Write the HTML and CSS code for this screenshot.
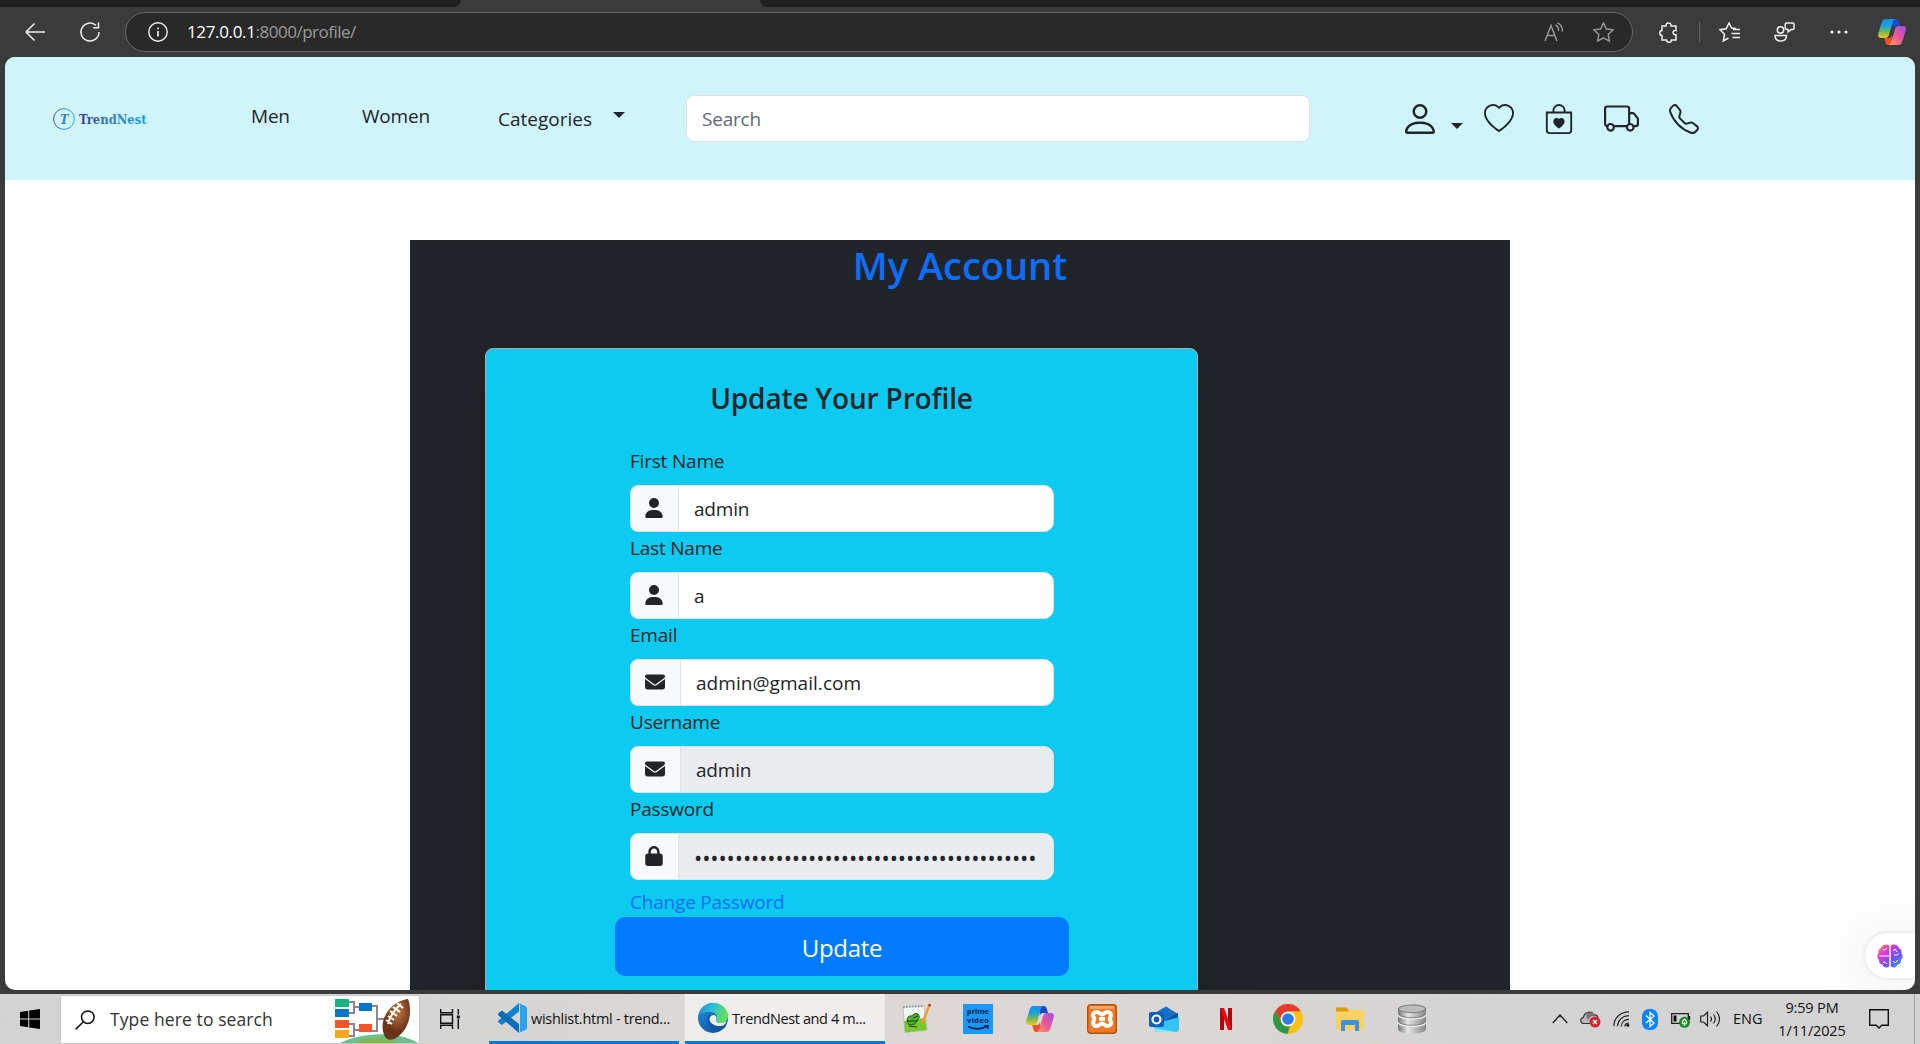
FILE: index.html
```html
<!DOCTYPE html>
<html lang="en">
<head>
<meta charset="utf-8">
<title>TrendNest</title>
<link rel="stylesheet" href="styles.css">
</head>
<body>
<svg class="defs" width="0" height="0" aria-hidden="true">
  <defs>
    <linearGradient id="cpA" x1="0" y1="0" x2="0" y2="1"><stop offset="0" stop-color="#1b8fe8"/><stop offset=".35" stop-color="#1a9fe0"/><stop offset=".65" stop-color="#6bb85a"/><stop offset="1" stop-color="#f5c518"/></linearGradient>
    <linearGradient id="cpB" x1="1" y1="0" x2="0" y2="1"><stop offset="0" stop-color="#a04df0"/><stop offset=".5" stop-color="#e8559a"/><stop offset="1" stop-color="#ffa24d"/></linearGradient>
    <linearGradient id="logoG" x1="0" x2="1"><stop offset="0" stop-color="#3a3f94"/><stop offset=".55" stop-color="#3a86c8"/><stop offset="1" stop-color="#12a5e6"/></linearGradient>
    <linearGradient id="brainG" x1="0" y1="0" x2="1" y2="1"><stop offset="0" stop-color="#ff9a3c"/><stop offset=".3" stop-color="#e33ad0"/><stop offset=".6" stop-color="#7a4df0"/><stop offset="1" stop-color="#22a8ff"/></linearGradient>
    <linearGradient id="edgeG" x1="0" y1="0" x2="1" y2=".3"><stop offset="0" stop-color="#1b8ad6"/><stop offset=".5" stop-color="#2cc0d8"/><stop offset="1" stop-color="#62e05a"/></linearGradient>
    <linearGradient id="edgeB" x1="0" y1="0" x2="1" y2="1"><stop offset="0" stop-color="#1f8fe0"/><stop offset="1" stop-color="#0c4a94"/></linearGradient>
    <linearGradient id="dbG" x1="0" x2="1"><stop offset="0" stop-color="#777"/><stop offset=".35" stop-color="#e6e6e6"/><stop offset="1" stop-color="#858585"/></linearGradient>
    <radialGradient id="ballG" cx=".55" cy=".3"><stop offset="0" stop-color="#c27a45"/><stop offset="1" stop-color="#6b331a"/></radialGradient>
    <symbol id="copilot" viewBox="0 0 28 26">
      <path fill="#1948cf" d="M13 0h4.500c2.500 0 3 1.800 3.600 4l.9 3h-5c-2 0-2.700 1-3.200 3z"/>
      <path fill="#f0502c" d="M15 26h-4.500C8 26 7.600 24 7 22l-.8-3h4.600c2 0 2.700-1 3.200-3z"/>
      <path fill="url(#cpA)" d="M7.500 0H18c-2 0-2.800 1.400-3.400 3.500L11 16c-.6 2-1.800 3-4 3H3c-2.500 0-3.300-2-2.700-4.500L3.500 4C4.300 1.400 5.500 0 7.500 0Z"/>
      <path fill="url(#cpB)" d="M20.500 26H10c2 0 2.800-1.400 3.400-3.500L17 10c.6-2 1.800-3 4-3h4c2.500 0 3.300 2 2.700 4.500L24.500 22c-.8 2.600-2 4-4 4Z"/>
    </symbol>
    <symbol id="fa-user" viewBox="0 0 448 512"><path d="M224 256A128 128 0 1 0 224 0a128 128 0 1 0 0 256zm-45.700 48C79.800 304 0 383.800 0 482.300C0 498.700 13.300 512 29.700 512H418.300c16.400 0 29.700-13.300 29.700-29.700C448 383.800 368.200 304 269.700 304H178.300z"/></symbol>
    <symbol id="fa-mail" viewBox="0 0 512 512"><path d="M48 64C21.500 64 0 85.500 0 112c0 15.100 7.100 29.300 19.200 38.400L236.800 313.600c11.400 8.500 27 8.500 38.400 0L492.800 150.400c12.100-9.100 19.200-23.300 19.200-38.400c0-26.500-21.500-48-48-48H48zM0 176V384c0 35.300 28.700 64 64 64H448c35.300 0 64-28.700 64-64V176L294.400 339.200c-22.800 17.100-54 17.100-76.800 0L0 176z"/></symbol>
    <symbol id="fa-lock" viewBox="0 0 448 512"><path d="M144 144v48H304V144c0-44.200-35.800-80-80-80s-80 35.800-80 80zM80 192V144C80 64.500 144.500 0 224 0s144 64.500 144 144v48h16c35.300 0 64 28.700 64 64V448c0 35.300-28.700 64-64 64H64c-35.300 0-64-28.700-64-64V256c0-35.300 28.700-64 64-64H80z"/></symbol>
  </defs>
</svg>

<div class="screen">
  <div class="tabs"><i class="tabs-left"></i><i class="tabs-active"></i><i class="tabs-right"></i></div>

  <div class="toolbar">
    <svg class="tb-back" width="20" height="18" viewBox="0 0 20 18"><path d="M20 9H1M9.500.5 1 9l8.500 8.500"/></svg>
    <svg class="tb-reload" width="20" height="20" viewBox="0 0 20 20"><path d="M19 10a9 9 0 1 1-3-6.700M18.500.5v5.300h-5.300"/></svg>
    <div class="address">
      <svg class="info" width="20" height="20" viewBox="0 0 20 20"><circle cx="10" cy="10" r="9.200"/><path d="M10 9v5.500M10 5.500v1.700" stroke-width="1.700"/></svg>
      <div class="url"><b>127.0.0.1</b><span>:8000/profile/</span></div>
      <svg class="read" width="20" height="20" viewBox="0 0 20 20"><path d="M1 19 7 3.500 13 19M3 13.500h8M11.500 3c2 1 3.200 3 3.200 6M13.500.8c3.200 1.500 5 4.500 5 8.700"/></svg>
      <svg class="star" width="21" height="20" viewBox="0 0 21 20"><path d="m10.500 1 2.900 6 6.600.9-4.800 4.500 1.200 6.600-5.900-3.200L4.600 19l1.200-6.600L1 7.900 7.600 7z"/></svg>
    </div>
    <svg class="ext" width="19" height="21" viewBox="0 0 19 21"><path d="M3 4h4c-.5-4 5.500-4 5 0h5v4.500c-4-.8-4 4.800 0 4.200V18h-4.500c0 3-5 3-5 0H3v-4.500c-3-.2-3-5 0-5z"/></svg>
    <i class="tb-div"></i>
    <svg class="fav" width="22" height="20" viewBox="0 0 22 20"><path d="M17 6.500 12.500 6 10 1 7.200 6.800 1 7.700l4.500 4.500L4.300 19l5.200-3M14 7.500h7M12.500 11.500H21M13.500 15.500H21"/></svg>
    <svg class="people" width="21" height="20" viewBox="0 0 21 20"><circle cx="6.500" cy="8" r="3.200"/><path d="M1 13.500h11.500c0 3.500-2 5.500-5.700 5.500S1 17 1 13.500ZM12.500 1h6.200q1.300 0 1.300 1.300v4q0 1.300-1.300 1.300H17l-3 2.400V7.600q-2.800 0-2.800-1.500V2.300Q11.200 1 12.500 1Z"/></svg>
    <svg class="dots" width="18" height="4" viewBox="0 0 18 4"><circle cx="2" cy="2" r="1.600"/><circle cx="9" cy="2" r="1.600"/><circle cx="16" cy="2" r="1.600"/></svg>
    <svg width="28" height="26"><use href="#copilot"/></svg>
  </div>

  <div class="page">
    <header class="site-nav">
      <div class="logo">
        <svg width="100" height="28" viewBox="0 -2 100 28">
          <circle cx="11" cy="12" r="10.400" fill="none" stroke="url(#logoG)" stroke-width=".9"/>
          <text class="logo-t" x="6.500" y="17" fill="#2f7fc4">T</text>
          <text class="logo-name" x="26" y="16.500" textLength="67.500" lengthAdjust="spacingAndGlyphs" fill="url(#logoG)">TrendNest</text>
        </svg>
      </div>
      <a class="nav-up nav-men">Men</a>
      <a class="nav-up nav-women">Women</a>
      <a class="nav-cat">Categories</a>
      <i class="caret caret-cat"></i>
      <div class="search">Search</div>
      <div class="actions">
        <svg width="40" height="40" viewBox="0 0 16 16"><path d="M8 8a3 3 0 1 0 0-6 3 3 0 0 0 0 6m2-3a2 2 0 1 1-4 0 2 2 0 0 1 4 0m4 8c0 1-1 1-1 1H3s-1 0-1-1 1-4 6-4 6 3 6 4m-1-.004c-.001-.246-.154-.986-.832-1.664C11.516 10.680 10.289 10 8 10s-3.516.680-4.168 1.332c-.678.678-.830 1.418-.832 1.664z"/></svg>
        <i class="caret caret-user"></i>
        <svg class="a-heart" width="30" height="30" viewBox="0 0 16 16"><path d="m8 2.748-.717-.737C5.600.281 2.514.878 1.400 3.053c-.523 1.023-.641 2.500.314 4.385.920 1.815 2.834 3.989 6.286 6.357 3.452-2.368 5.365-4.542 6.286-6.357.955-1.886.838-3.362.314-4.385C13.486.878 10.400.280 8.717 2.010zM8 15C-7.333 4.868 3.279-3.040 7.824 1.143q.090.083.176.171a3 3 0 0 1 .176-.170C12.720-3.042 23.333 4.867 8 15"/></svg>
        <svg class="a-bag" width="30" height="30" viewBox="0 0 16 16"><path fill-rule="evenodd" d="M10.500 3.500a2.500 2.500 0 0 0-5 0V4h5zm1 0V4H15v10a2 2 0 0 1-2 2H3a2 2 0 0 1-2-2V4h3.500v-.5a3.500 3.500 0 1 1 7 0M14 14V5H2v9a1 1 0 0 0 1 1h10a1 1 0 0 0 1-1M8 7.993c1.664-1.711 5.825 1.283 0 5.132-5.825-3.850-1.664-6.843 0-5.132"/></svg>
        <svg class="a-truck" width="35" height="35" viewBox="0 0 16 16"><path d="M0 3.500A1.500 1.500 0 0 1 1.500 2h9A1.500 1.500 0 0 1 12 3.500V5h1.020a1.500 1.500 0 0 1 1.170.563l1.481 1.850a1.500 1.500 0 0 1 .329.938V10.500a1.500 1.500 0 0 1-1.500 1.500H14a2 2 0 1 1-4 0H5a2 2 0 1 1-3.998-.085A1.500 1.500 0 0 1 0 10.500zm1.294 7.456A2 2 0 0 1 4.732 11h5.536a2 2 0 0 1 .732-.732V3.500a.5.5 0 0 0-.5-.5h-9a.5.5 0 0 0-.5.5v7a.5.5 0 0 0 .294.456M12 10a2 2 0 0 1 1.732 1h.768a.5.5 0 0 0 .5-.5V8.350a.5.5 0 0 0-.110-.312l-1.480-1.850A.5.5 0 0 0 13.020 6H12zm-9 1a1 1 0 1 0 0 2 1 1 0 0 0 0-2m9 0a1 1 0 1 0 0 2 1 1 0 0 0 0-2"/></svg>
        <svg class="a-phone" width="30" height="30" viewBox="0 0 16 16"><path d="M3.654 1.328a.678.678 0 0 0-1.015-.063L1.605 2.300c-.483.484-.661 1.169-.450 1.770a17.600 17.600 0 0 0 4.168 6.608 17.600 17.600 0 0 0 6.608 4.168c.601.211 1.286.033 1.770-.450l1.034-1.034a.678.678 0 0 0-.063-1.015l-2.307-1.794a.680.680 0 0 0-.580-.122l-2.190.547a1.750 1.750 0 0 1-1.657-.459L5.482 8.062a1.750 1.750 0 0 1-.460-1.657l.548-2.190a.680.680 0 0 0-.122-.580zM1.884.511a1.745 1.745 0 0 1 2.612.163L6.290 2.980c.329.423.445.974.315 1.494l-.547 2.190a.680.680 0 0 0 .178.643l2.457 2.457a.680.680 0 0 0 .644.178l2.189-.547a1.750 1.750 0 0 1 1.494.315l2.306 1.794c.829.645.905 1.870.163 2.611l-1.034 1.034c-.740.740-1.846 1.065-2.877.702a18.600 18.600 0 0 1-7.010-4.420 18.600 18.600 0 0 1-4.420-7.009c-.362-1.030-.037-2.137.703-2.877z"/></svg>
      </div>
    </header>

    <main class="account">
      <h1>My Account</h1>
      <section class="card">
        <h2>Update Your Profile</h2>
        <form class="form">
          <label>First Name</label>
          <div class="group"><i><svg width="18" height="20"><use href="#fa-user"/></svg></i><div class="field">admin</div></div>
          <label>Last Name</label>
          <div class="group"><i><svg width="18" height="20"><use href="#fa-user"/></svg></i><div class="field">a</div></div>
          <label>Email</label>
          <div class="group"><i><svg width="20" height="20"><use href="#fa-mail"/></svg></i><div class="field email">admin@gmail.com</div></div>
          <label>Username</label>
          <div class="group off"><i><svg width="20" height="20"><use href="#fa-mail"/></svg></i><div class="field">admin</div></div>
          <label>Password</label>
          <div class="group off"><i><svg width="18" height="20"><use href="#fa-lock"/></svg></i><div class="field"><span class="mask">•••••••••••••••••••••••••••••••••••••••••••</span></div></div>
          <a class="change">Change Password</a>
        </form>
        <div class="submit">Update</div>
      </section>
    </main>

    <div class="assistant">
      <svg width="26" height="24" viewBox="0 0 26 24">
        <path fill="url(#brainG)" d="M12.300 1.500v21C9 24.500 6 23 5.500 20.500 3 20.500 1.500 18 2.200 16 0 14.500-.3 11 1.600 9.500 1 7 2 4.800 4 4.300 4.500 1 9-1 12.300 1.500ZM13.700 1.500v21c3.300 2 6.300.5 6.800-2 2.500 0 4-2.500 3.300-4.500 2.200-1.500 2.500-5 .6-6.500.6-2.500-.4-4.700-2.400-5.200-.5-3.300-5-5.300-8.300-2.800Z"/>
        <path fill="none" stroke="#fff" d="M2 12h10M6 6q3 0 4-2M6 18q3 0 4 2M16 7l2-2 2 3M17 11h3l2-1.500M16 17l2 2M18 19l3-3"/>
      </svg>
    </div>
  </div>

  <footer class="taskbar">
    <div class="start"><svg width="20" height="20" viewBox="0 0 20 20"><path d="M0 3 8.200 1.800v7.700H0zM9.200 1.600 20 0v9.500H9.200zM0 10.500h8.200v7.700L0 17zM9.200 10.500H20V20L9.200 18.400z"/></svg></div>
    <div class="tsearch">
      <svg width="20" height="20" viewBox="0 0 20 20" fill="none" stroke="#111" stroke-width="1.500"><circle cx="12.800" cy="7.200" r="6.300"/><path d="M8.300 11.700.6 19.400"/></svg>
      <span class="placeholder">Type here to search</span>
      <svg class="doodle" width="83" height="47" viewBox="0 0 83 47">
        <path fill="#6cc08a" d="M5 47C22 38 60 33 83 47Z"/><path fill="#7fb84a" d="M20 47q22-10 42 0z"/>
        <path fill="none" stroke="#8b8499" stroke-width="2" d="M13 6h6v11h-6M19 11h7M13 28h6v12h-6M19 34h7M36 10h6v25h-6M42 23h8"/>
        <path fill="#18b07c" d="M0 3h14v8H0z"/><path fill="#0b74c4" d="M0 13h14v8H0zM24 7h13v8H24z"/><path fill="#f2552a" d="M0 24h14v8H0zM24 28h13v8H24z"/><path fill="#f3a91f" d="M0 34h14v8H0z"/>
        <path fill="url(#ballG)" d="M73 3c5 13 1 31-12 39-5 3-10 2-12-3-6-16 7-34 24-36Z"/>
        <path stroke="#fff" stroke-width="2" fill="none" d="M66 8C59 14 55 20 53 28M62 7l6 5M58 11l7 5M55 15l7 5M53 20l6 4M51 24l6 4"/>
      </svg>
    </div>
    <svg class="taskview" width="20" height="20" viewBox="0 0 20 20" fill="none" stroke="#111" stroke-width="1.400"><path d="M.7 0v3.800h11.800V0M.7 20v-3.800h11.800V20M.7 5.800h11.800v8.400H.7zM18.300 0v5.500M18.300 10v10"/><path fill="#111" stroke="none" d="M16.800 6.500h3v3h-3z"/></svg>
    <div class="task vs">
      <svg width="30" height="30" viewBox="0 0 30 30"><path fill="#0a84cf" d="M22 0v8.500L5 22 1.500 19.500q-1-1 0-2z"/><path fill="#0a6fb8" d="m1.500 10 3.500-2.500L22 21v9L1.500 12.500q-1-1.200 0-2.500Z"/><path fill="#2aa3ef" d="m22 0 7 3.500q1 .5 1 1.500v20q0 1-1 1.500L22 30q1-1 1-3V3q0-2-1-3Z"/></svg>
      <span>wishlist.html - trend...</span>
    </div>
    <div class="task edge">
      <svg width="30" height="30" viewBox="0 0 30 30"><circle cx="15" cy="15" r="15" fill="url(#edgeB)"/><path fill="url(#edgeG)" d="M.2 13C1.500 5.500 7.500 0 15 0c9 0 15 6.500 15 13 0 4.500-3.500 7-7.500 7-3.500 0-5-1.500-4.500-3 2-3 .5-8-6-8C6 9 1.500 11 .2 13Z"/><path fill="#0f57a6" d="M11 12c-3 5-1 13 6 15 4 1 8 0 11-4-7 3-14 0-14-5.500 0-2 .5-3.500 1.500-5z"/><path fill="#f0eeed" d="M11.500 16.500c.2-3 2-4.500 4-4.500 2.600 0 3.700 2.600 2.500 5-.5 1.500 1 3 4.500 3 3 0 5.500-1 6.500-2.500-2 5-5 6-8.500 5.500-5-.5-9-3.500-9-6.500Z"/></svg>
      <span>TrendNest and 4 m...</span>
    </div>
    <div class="pins">
      <svg width="30" height="30" viewBox="0 0 30 30"><path fill="#f4f6f4" stroke="#aab" stroke-width=".7" d="M2 3 23 2l3 24-22 2.500z"/><path fill="#79c82e" d="m3 17 21-3 2 12-22 2.500z"/><path fill="none" stroke="#999" stroke-dasharray="1.500 1.500" stroke-width="2" d="m2 3 21-1"/><path fill="#4fb32b" stroke="#265f17" d="M6 17q0-6 5-5 2-4 6-2 3 4-1 6l-2 4-6 1z"/><path fill="none" stroke="#1a3d10" d="M6 17h11M12 14l5-2M8 22l8 1"/><path stroke="#e8a030" stroke-width="2.600" d="M28.500 1 21 20"/><path stroke="#b03a2a" stroke-width="2.600" d="m29 0-.8 2"/></svg>
      <svg width="30" height="30" viewBox="0 0 30 30"><path fill="#1a98ff" d="M0 0h30v30H0z"/><text class="prime" x="4" y="9.500" textLength="22">prime</text><text class="prime" x="4" y="19" textLength="22">video</text><path fill="none" stroke="#0b2240" stroke-width="1.600" d="M5 22.500q10 5 19-.5m-2.500-.3H25l-.5 3"/></svg>
      <svg width="28" height="26"><use href="#copilot"/></svg>
      <svg width="30" height="30" viewBox="0 0 30 30"><rect x=".7" y=".7" width="28.600" height="28.600" rx="3" fill="#f07823" stroke="#b0500f" stroke-width="1.400"/><path fill="#f7a468" d="M3 2h24v3H3z"/><path fill="none" stroke="#fff" stroke-width="4" stroke-linejoin="round" d="M9.500 8c3 0 4 2.500 5.500 2.500S17.500 8 20.500 8s4 3 3 5-1.500 2 0 4 0 5-3 5-4-2.500-5.500-2.500S12.500 22 9.500 22s-4-3-3-5 1.500-2 0-4 0-5 3-5ZM12 15h6"/></svg>
      <svg width="30" height="28" viewBox="0 0 30 28"><path fill="#1671c9" d="M4 9 17 1.500 29 9v9L10 26z"/><path fill="#0a4fa0" d="m17 15 12-7v6L17 21z"/><path fill="#35c3f3" d="M5 19 30 12v12q0 3-3 3H8q-3 0-3-3z"/><path fill="#8fe3fb" d="m5 23 22 4H8q-3 0-3-3z"/><rect y="7" width="15" height="15" rx="2" fill="#0f5fb8"/><circle cx="7.500" cy="14.500" r="4" fill="none" stroke="#fff" stroke-width="2.200"/></svg>
      <svg width="12" height="22" viewBox="0 0 12 22"><path fill="#b1060f" d="M0 0h4v22H0zM8 0h4v22H8z"/><path fill="#e50914" d="M0 0h4l8 22H8z"/></svg>
      <svg width="30" height="30" viewBox="0 0 30 30"><circle cx="15" cy="15" r="15" fill="#fbc116"/><path fill="#e33b2e" d="M2 7.500A15 15 0 0 1 28 7.500H15a7.500 7.500 0 0 0-6.500 11.200z"/><path fill="#2a9a48" d="M2 7.500 8.500 18.700A7.500 7.500 0 0 0 17 22.200L14.500 30A15 15 0 0 1 2 7.500Z"/><path fill="#fbc116" d="M28 7.500H15l6.500 11.200L14.500 30A15 15 0 0 0 28 7.500"/><circle cx="15" cy="15" r="7.300" fill="#fff"/><circle cx="15" cy="15" r="5.800" fill="#2b7de9"/></svg>
      <svg width="28" height="24" viewBox="0 0 28 24"><path fill="#dd9a0c" d="M0 1.500Q0 .5 1 .5h9q1 0 1.500 1l1 2v6H0z"/><path fill="#fcd163" d="M0 4.500h12l2-1.500h13q1 0 1 1v18q0 1-1 1H1q-1 0-1-1z"/><path fill="#3a93dc" d="M5 24v-9q0-2 2-2h14q2 0 2 2v9h-4v-6H9v6z"/></svg>
      <svg width="28" height="30" viewBox="0 0 28 30"><path fill="url(#dbG)" d="M0 5c0-6 28-6 28 0v20c0 6-28 6-28 0z"/><ellipse cx="14" cy="4.800" rx="13.300" ry="3.800" fill="#bdbdbd" stroke="#6b6b6b" stroke-width=".8"/><path fill="none" stroke="#f2f2f2" stroke-width="1.600" d="M0 11c3 5 25 5 28 0M0 18.500c3 5 25 5 28 0"/><path fill="none" stroke="#6d6d6d" stroke-width=".8" d="M0 10c3 5 25 5 28 0M0 17.500c3 5 25 5 28 0"/></svg>
    </div>
    <div class="tray">
      <svg width="16" height="10" viewBox="0 0 16 10" fill="none" stroke="#222" stroke-width="1.400"><path d="m.7 9 7.300-8 7.300 8"/></svg>
      <svg class="cloud" width="21" height="18" viewBox="0 0 21 18"><path fill="#bdbdbd" stroke="#333" stroke-width="1.200" d="M4 13.500C0 13.500-.3 8 3.500 7.500 4 1.500 12 .5 13.500 5 17 4 18 7 18 8.500l-3 5z"/><path fill="#777" d="M6 5.500C8 1 13 1.500 14 5.500q-4 0-6 5z"/><circle cx="15" cy="12" r="5.500" fill="#db2233"/><path stroke="#fff" stroke-width="1.400" d="m13 10 4 4m0-4-4 4"/></svg>
      <svg class="wifi" width="17" height="16" viewBox="0 0 17 16" fill="none" stroke="#222" stroke-width="1.200"><path d="M.8 15C1 7 7 1 16 .8M4.500 15.300C4.800 9.500 9 4.800 16 4.600M8.300 15.500c.2-4 3.200-7 7.700-7.100M11.800 15.500c0-2 1.700-3.500 4.200-3.500"/><circle cx="14.800" cy="14.300" r="1.500" fill="#111" stroke="none"/></svg>
      <svg class="bt" width="16" height="21" viewBox="0 0 16 21"><rect width="16" height="21" rx="7" fill="#0a84ff"/><path fill="none" stroke="#fff" stroke-width="1.300" d="m4 6.500 8 7.500-4 3.500v-14L12 7l-8 7"/></svg>
      <svg class="bat" width="20" height="17" viewBox="0 0 20 17"><path fill="none" stroke="#222" stroke-width="1.300" d="M.7 2.700h16.600v9.600H.7zM18.500 5v4"/><path fill="#111" d="M2.500 4.500h3v6h-3z"/><circle cx="13.500" cy="11.300" r="5.500" fill="#138a1e"/><path fill="none" stroke="#fff" stroke-width="1.200" d="M13.500 8c3 3 3 5 0 5.200-3-.2-3-2.200 0-5.200Zm0 3v4"/></svg>
      <svg class="vol" width="21" height="18" viewBox="0 0 21 18" fill="none" stroke="#222" stroke-width="1.200"><path d="M.7 6h2.800L7.500 2.200v13.600L3.500 12H.7zM10.500 6.500q2 2.500 0 5M13.500 4.500q3.500 4.500 0 9M16.500 1.500q6 7.500 0 15"/></svg>
      <span class="lang">ENG</span>
      <div class="clock"><span>9:59 PM</span><span>1/11/2025</span></div>
      <svg class="note" width="20" height="21" viewBox="0 0 20 21" fill="none" stroke="#111" stroke-width="1.400"><path d="M.7.7h18.600v15.600h-6.500L10 19l-2.800-2.700H.7z"/></svg>
      <i class="desk"></i>
    </div>
  </footer>
</div>
</body>
</html>
```
FILE: styles.css
```css
* { box-sizing: border-box; }

html, body { margin: 0; height: 100%; overflow: hidden; }

body {
  font-family: "Open Sans", "Noto Sans", sans-serif;
  font-size: 19px;
  line-height: 30px;
  color: #212529;
}

.defs { position: absolute; }
svg { display: block; flex: none; }
i { font-style: normal; }
b { font-weight: 400; }
span, a { white-space: nowrap; }

.screen { width: 1920px; height: 1044px; display: flex; flex-direction: column; background: #3b3b3b; }

/* browser chrome */
.tabs { height: 7px; display: flex; }
.tabs-left { width: 461px; background: #202020; border-bottom-right-radius: 8px; }
.tabs-active { width: 299px; }
.tabs-right { flex: 1; background: #202020; border-bottom-left-radius: 8px; }

.toolbar { height: 50px; display: flex; align-items: center; padding-left: 25px; }
.toolbar > svg:not(:last-child) { fill: none; stroke: #f0f0f0; stroke-width: 1.5; }
.tb-reload { margin-left: 35px; }
.address {
  width: 1508px; height: 40px; margin-left: 25px; padding-left: 22px;
  display: flex; align-items: center;
  border: 1px solid #666; border-radius: 20px; background: #292929;
}
.address svg { fill: none; stroke: #9a9a9a; stroke-width: 1.4; }
.address .info { stroke: #eee; }
.url { width: 1357px; margin-left: 19px; padding-bottom: 1px; font-size: 17px; letter-spacing: -.5px; color: #9a9a9a; }
.url b { color: #fff; letter-spacing: -.35px; }
.star { margin-left: 29px; }
.ext { margin-left: 26px; }
.tb-div { width: 1px; height: 20px; margin-left: 21px; background: #666; }
.fav { margin-left: 19px; }
.people { margin-left: 33px; }
.toolbar .dots { margin-left: 35px; fill: #f0f0f0 !important; stroke: none !important; }
.dots + svg { margin-left: 30px; }

/* viewport */
.page {
  position: relative;
  width: 1910px; height: 933px; margin-left: 5px;
  overflow: hidden; border-radius: 10px; background: #fff;
}

.site-nav {
  height: 123px; padding-left: 48px; display: flex; align-items: center;
  background: #cff4fc;
}
.logo { width: 198px; }
.logo-t { font: italic bold 15px "Liberation Serif", serif; }
.logo-name { font: bold 12.5px "DejaVu Serif", serif; }
.nav-up { padding-bottom: 6px; letter-spacing: -.2px; }
.nav-men { width: 111px; }
.nav-women { width: 136px; }
.nav-cat { width: 115px; }
.caret { border: 6px solid transparent; border-top-color: #212529; border-bottom: 0; }
.caret-cat { margin-bottom: 8px; width: 12px; }
.search {
  width: 624px; height: 47px; margin-left: 61px; padding: 8px 15px;
  border: 1px solid #dee2e6; border-radius: 8px; background: #fff; color: #65696e;
  letter-spacing: -.2px;
}
.actions { display: flex; align-items: center; margin-left: 90px; fill: #212529; }
.caret-user { margin: 15px 0 0 11px; }
.a-heart { margin-left: 21px; }
.a-bag { margin-left: 30px; }
.a-truck { margin-left: 30px; }
.a-phone { margin-left: 30px; }

/* account panel */
.account { width: 1100px; height: 760px; margin: 60px 0 0 405px; background: #212529; }
h1, h2 { margin: 0; font-weight: 600; text-align: center; }
h1 { height: 108px; padding-top: 1px; font-size: 38px; line-height: 48px; color: #0d6efd; }
.card {
  width: 713px; height: 720px; margin-left: 75px; padding-top: 31px;
  border: 1px solid #a9adb2; border-radius: 8px; background: #0dcaf0;
  box-shadow: 0 20px 60px rgba(0, 0, 0, .175);
}
h2 { font-size: 28px; line-height: 36px; letter-spacing: -.15px; }
.form { width: 424px; margin: 29px 0 0 144px; letter-spacing: -.2px; }
label { display: block; height: 40px; padding-top: 1px; }
.group { display: flex; height: 47px; border: 1px solid #dee2e6; border-radius: 8px 10px 10px 8px; background: #fff; overflow: hidden; }
.group i { padding: 12px 15px 0 14px; border-right: 1px solid #dee2e6; background: #f8f9fa; fill: #212529; }
.field { flex: 1; padding: 8px 15px 0; overflow: hidden; }
.email { letter-spacing: .05px; }
.off .field { background: #e9ecef; }
.mask { display: block; overflow: hidden; font-size: 22px; letter-spacing: -.12px; }
.change { display: block; padding: 7px 0 0; }
.change { color: #0d6efd; }
.submit {
  width: 454px; height: 59px; margin-left: 129px; padding-top: 1px;
  border-radius: 10px; background: #007bff; color: #fff;
  font-size: 24px; line-height: 59px; letter-spacing: -.3px; text-align: center;
}

.assistant {
  position: absolute; right: 0; bottom: 12px;
  width: 50px; height: 45px; padding: 11px 12px;
  border-radius: 23px 0 0 23px; background: #fff;
  box-shadow: 0 0 4px rgba(0, 0, 0, .12), 0 4px 60px rgba(0, 0, 0, .12);
}

/* taskbar */
.taskbar {
  height: 50px; margin-top: 4px; display: flex; align-items: center;
  background: linear-gradient(90deg, #d3d3d3 0, #d5d5d4 25%, #ddd8d5 36%, #ddd8d5 52%, #d4d4d4 80%, #d3d3d3);
  color: #111;
}
.start { width: 60px; padding-left: 20px; }
.tsearch {
  align-self: flex-start; width: 360px; height: 49px; margin-top: 1px; padding-left: 14px;
  display: flex; align-items: center; background: #fff; border: 1px solid #c8c8c8; color: #333;
}
.placeholder { width: 225px; margin-left: 15px; padding-bottom: 1px; font-size: 17.5px; letter-spacing: .1px; }
.doodle { align-self: flex-end; }
.taskview { margin-left: 20px; }
.task { display: flex; align-items: center; height: 50px; font-size: 14.5px; border-bottom: 3px solid #0078d7; }
.task span { padding-top: 2px; }
.vs { width: 190px; margin-left: 29px; padding-left: 8px; }
.vs span { margin-left: 4px; letter-spacing: -.28px; }
.edge { width: 200px; margin-left: 6px; padding-left: 13px; background: #f0eeed; }
.edge span { margin-left: 4px; letter-spacing: -.38px; }
.pins { width: 558px; display: grid; grid-template-columns: repeat(9, 62px); justify-items: center; align-items: center; }
.tray { display: flex; align-items: center; margin-left: 109px; }
.cloud { margin-left: 12px; }
.wifi { margin-left: 12px; }
.bt { margin-left: 12px; }
.bat { margin-left: 13px; }
.vol { margin-left: 9px; }
.lang { width: 45px; margin-left: 12px; font-size: 14.5px; }
.clock { width: 68px; padding-bottom: 1px; display: flex; flex-direction: column; align-items: center; font-size: 14.5px; line-height: 23px; letter-spacing: -.15px; }
.note { margin-left: 23px; }
.desk { width: 1px; height: 50px; margin-left: 25px; background: #a5a5a5; }
.prime { font: bold 7.500px/1 "Open Sans", sans-serif; fill: #0b2240; }
```
